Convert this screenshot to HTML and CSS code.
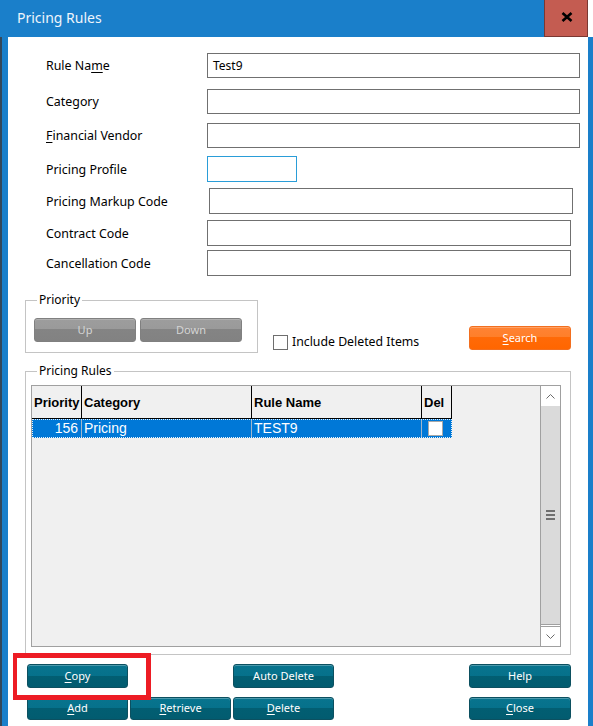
FILE: index.html
```html
<!DOCTYPE html>
<html>
<head>
<meta charset="utf-8">
<title>Pricing Rules</title>
<link rel="stylesheet" href="styles.css">
</head>
<body>
<div class="window">
  <div class="titlebar">
    <span class="title">Pricing Rules</span>
    <div class="close">
      <svg width="12" height="10" viewBox="0 0 12 10"><path d="M1.5 1 L10.5 9 M10.5 1 L1.5 9" stroke="#000" stroke-width="2.6" fill="none"/></svg>
    </div>
  </div>
  <div class="frame">
    <div class="content">
      <div class="form">
        <div class="field"><span class="lbl">Rule Na<u>m</u>e</span><div class="input w-wide">Test9</div></div>
        <div class="field"><span class="lbl">Cate<u>g</u>ory</span><div class="input w-wide"></div></div>
        <div class="field"><span class="lbl"><u>F</u>inancial Vendor</span><div class="input w-wide"></div></div>
        <div class="field"><span class="lbl">Pricing Profile</span><div class="input w-short"></div></div>
        <div class="field"><span class="lbl">Pricing Markup Code</span><div class="input w-markup"></div></div>
        <div class="field"><span class="lbl">Contract Code</span><div class="input w-mid"></div></div>
        <div class="field"><span class="lbl">Cancellation Code</span><div class="input w-mid"></div></div>
      </div>

      <div class="mid">
        <fieldset class="group priority">
          <legend>Priority</legend>
          <div class="btns">
            <div class="btn grey">Up</div>
            <div class="btn grey">Down</div>
          </div>
        </fieldset>
        <div class="check"><span class="box"></span><span>Include Deleted Items</span></div>
        <div class="btn orange search"><span><u>S</u>earch</span></div>
      </div>

      <fieldset class="group rules">
        <legend>Pricing Rules</legend>
        <div class="grid">
          <div class="table">
            <div class="thead">
              <div class="th c1">Priority</div>
              <div class="th c2">Category</div>
              <div class="th c3">Rule Name</div>
              <div class="th c4">Del</div>
            </div>
            <div class="trow">
              <div class="td c1 num">156</div>
              <div class="td c2">Pricing</div>
              <div class="td c3">TEST9</div>
              <div class="td c4"><span class="cb"></span></div>
            </div>
          </div>
          <div class="scrollbar">
            <div class="sbtn up"><svg width="9" height="5" viewBox="0 0 9 5"><polyline points="0.5,4.5 4.5,0.5 8.5,4.5" fill="none" stroke="#6a6a6a" stroke-width="1"/></svg></div>
            <div class="thumb"><span class="grip"></span><span class="grip"></span><span class="grip"></span></div>
            <div class="sbtn down"><svg width="9" height="5" viewBox="0 0 9 5"><polyline points="0.5,0.5 4.5,4.5 8.5,0.5" fill="none" stroke="#6a6a6a" stroke-width="1"/></svg></div>
          </div>
        </div>
      </fieldset>

      <div class="actions">
        <div class="btn teal a-copy"><span><u>C</u>opy</span></div>
        <div class="btn teal a-auto">Auto Delete</div>
        <div class="btn teal a-help">Help</div>
        <div class="btn teal a-add"><span><u>A</u>dd</span></div>
        <div class="btn teal a-retr"><span><u>R</u>etrieve</span></div>
        <div class="btn teal a-del"><span><u>D</u>elete</span></div>
        <div class="btn teal a-close"><span><u>C</u>lose</span></div>
        <div class="highlight"></div>
      </div>
    </div>
  </div>
</div>
</body>
</html>
```

FILE: styles.css
```css
* { box-sizing: border-box; }
html, body { margin: 0; padding: 0; }
body {
  width: 593px;
  height: 726px;
  overflow: hidden;
  background: #fff;
  font-family: "Noto Sans", "Open Sans", sans-serif;
  font-size: 12px;
  color: #000;
}
u { text-decoration: underline; text-underline-offset: 2px; }

.window { display: flex; flex-direction: column; height: 726px; }

.titlebar {
  flex: none;
  width: 588px;
  height: 37px;
  background: #1a7fca;
  display: flex;
  align-items: center;
}
.title {
  flex: 1;
  color: #eef5fc;
  font-size: 14px;
  padding-left: 17px;
  margin-top: -3px;
}
.close {
  width: 44px;
  height: 37px;
  background: #c45c51;
  border: 1px solid #7a3832;
  border-top: 0;
  display: flex;
  align-items: center;
  justify-content: center;
  padding-bottom: 3px;
  padding-left: 2px;
}
.close svg { display: block; }

.frame {
  flex: 1;
  display: flex;
  background: #1a7fca;
  border-left: 2px solid #33475a;
  padding-left: 6px;
  padding-right: 5px;
}
.content {
  flex: 1;
  background: #fff;
  display: flex;
  flex-direction: column;
}

/* form */
.form { display: flex; flex-direction: column; padding-top: 15px; padding-left: 38px; }
.field { display: flex; align-items: center; height: 26px; }
.field:nth-child(2) { margin-top: 10px; }
.field:nth-child(3) { margin-top: 8px; }
.field:nth-child(4) { margin-top: 8px; }
.field:nth-child(5) { margin-top: 6px; }
.field:nth-child(6) { margin-top: 6px; }
.field:nth-child(7) { margin-top: 4px; }
.lbl { width: 161px; flex: none; font-size: 12.4px; }
.input {
  height: 26px;
  border: 1px solid #707070;
  background: #fff;
  padding-left: 5px;
  line-height: 24px;
}
.w-wide { width: 373px; height: 25px; line-height: 23px; }
.w-short { width: 90px; border-color: #2a9dd8; }
.w-markup { width: 364px; margin-left: 2px; }
.w-mid { width: 364px; }

/* middle row */
.mid { display: flex; align-items: flex-start; margin-top: 16px; padding: 0 17px; }
fieldset.group {
  border: 1px solid #c4c4c4;
  min-width: 0;
}
fieldset.group legend {
  padding: 0 2px;
  line-height: 16px;
  font-size: 12px;
}
fieldset.priority { margin: 0; width: 233px; padding: 10px 15px 10px 8px; }
fieldset.priority legend { margin-left: 3px; }
.btns { display: flex; gap: 4px; }

.btn {
  display: flex;
  align-items: center;
  justify-content: center;
  font-size: 11px;
  color: #fff;
  border-radius: 3px;
  padding-bottom: 2px;
}
.grey {
  width: 102px;
  height: 24px;
  background: linear-gradient(#9d9d9d 0, #9a9a9a 45%, #848484 45%, #828282 100%);
  border: 1px solid #808080;
  color: #d4d4d4;
  box-shadow: inset 0 1px 0 rgba(255,255,255,0.2);
}
.orange {
  background: linear-gradient(#ff8334 0, #ff7f2a 45%, #ff6a08 45%, #ff6600 100%);
  border: 1px solid #f26f1f;
  box-shadow: inset 0 1px 0 rgba(255,255,255,0.25);
}
.teal {
  background: linear-gradient(#08748e 0, #06718b 50%, #025e72 50%, #025c70 100%);
  border: 1px solid #0c5060;
  box-shadow: inset 0 1px 0 rgba(255,255,255,0.28);
}

.check {
  display: flex;
  align-items: center;
  gap: 4px;
  margin: 42px 0 0 15px;
  line-height: 16px;
  font-size: 12.3px;
}
.box { width: 15px; height: 15px; border: 1px solid #6e6e6e; background: #fff; }
.search { width: 102px; height: 24px; margin-left: auto; margin-top: 34px; }

/* pricing rules group */
fieldset.rules { margin: 10px 17px 0 17px; padding: 6px 9px 7px 5px; }
fieldset.rules legend { margin-left: 6px; }
.grid {
  height: 262px;
  border: 1px solid #a0a0a0;
  display: flex;
  background: #f0f0f0;
}
.table { flex: 1; }
.thead { display: flex; height: 33px; width: 420px; }
.th {
  display: flex;
  align-items: center;
  padding-left: 2px;
  font-family: "Liberation Sans", Arial, sans-serif;
  font-weight: bold;
  font-size: 13px;
  border-right: 1px solid #000;
  border-bottom: 1px solid #000;
  background: #f0f0f0;
}
.c1 { width: 50px; }
.c2 { width: 170px; }
.c3 { width: 170px; }
.c4 { width: 30px; }
.trow {
  display: flex;
  width: 420px;
  height: 19px;
  background: #0078d7;
  color: #fff;
  font-family: "Liberation Sans", Arial, sans-serif;
  font-size: 14px;
  line-height: 19px;
  outline: 1px dotted #e8f2fb;
  outline-offset: -1px;
}
.td { padding-left: 2px; border-right: 1px solid #9fb6cc; }
.td.c4 { border-right: 0; padding-left: 0; }
.num { text-align: right; padding-right: 3px; }
.cb {
  display: block;
  width: 15px;
  height: 15px;
  margin: 2px 0 0 6px;
  background: #fff;
  border: 1px solid #a8a8a8;
}

.scrollbar {
  width: 20px;
  border-left: 1px solid #a0a0a0;
  display: flex;
  flex-direction: column;
  background: #fff;
}
.sbtn {
  height: 20px;
  display: flex;
  align-items: center;
  justify-content: center;
  background: #fff;
}
.sbtn svg { display: block; }
.sbtn.down { border-top: 1px solid #a0a0a0; }
.thumb {
  flex: 1;
  background: #dadada;
  border-bottom: 1px solid #a0a0a0;
  margin-bottom: 1px;
  display: flex;
  flex-direction: column;
  align-items: center;
  justify-content: center;
  gap: 2px;
}
.grip { display: block; width: 9px; height: 2px; background: #707070; }

/* actions */
.actions {
  position: relative;
  display: grid;
  grid-template-columns: 101px 101px 101px 1fr 102px;
  grid-template-rows: 24px 23px;
  column-gap: 2px;
  row-gap: 9px;
  padding: 9px 17px 0 19px;
}
.a-copy { grid-column: 1; grid-row: 1; }
.a-auto { grid-column: 3; grid-row: 1; }
.a-help { grid-column: 5; grid-row: 1; }
.a-add { grid-column: 1; grid-row: 2; }
.a-retr { grid-column: 2; grid-row: 2; }
.a-del { grid-column: 3; grid-row: 2; }
.a-close { grid-column: 5; grid-row: 2; }
.highlight {
  position: absolute;
  left: 5px;
  top: -2px;
  width: 138px;
  height: 47px;
  border: 5px solid #ed1c24;
  border-left-width: 4px;
}
```
